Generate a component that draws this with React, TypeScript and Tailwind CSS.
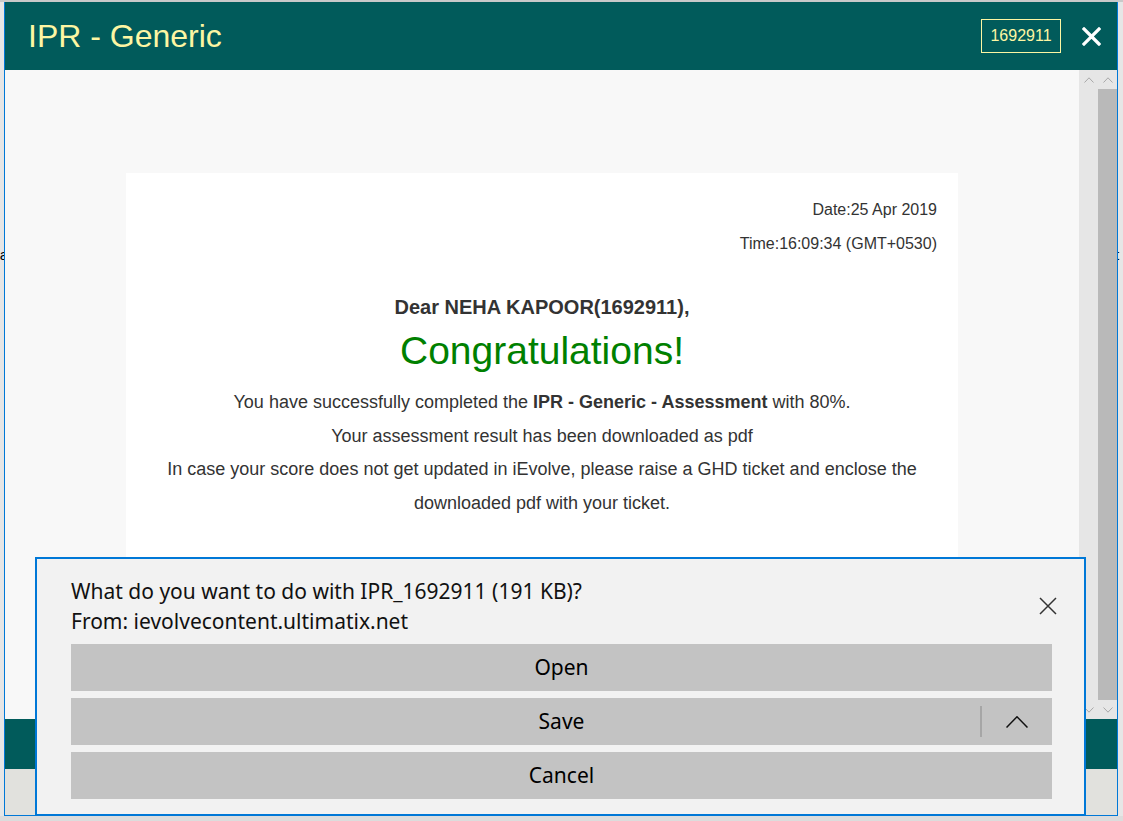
import React from "react";

const Chevron = ({ up, color = "#a8a8a8", w = 10, h = 6, sw = 1 }: { up?: boolean; color?: string; w?: number; h?: number; sw?: number }) => (
  <svg width={w} height={h} viewBox={`0 0 ${w} ${h}`} fill="none">
    {up ? (
      <path d={`M0.5 ${h - 0.5} L${w / 2} 0.8 L${w - 0.5} ${h - 0.5}`} stroke={color} strokeWidth={sw} />
    ) : (
      <path d={`M0.5 0.5 L${w / 2} ${h - 0.8} L${w - 0.5} 0.5`} stroke={color} strokeWidth={sw} />
    )}
  </svg>
);

const ScrollBar = ({ thumb }: { thumb?: boolean }) => (
  <div className="w-[19px] bg-[#e6e6e6] flex flex-col">
    <div className="h-[19px] flex items-center justify-center">
      <Chevron up />
    </div>
    <div className="flex-1 flex">
      {thumb && <div className="flex-1 bg-[#b9b9b9]" />}
    </div>
    <div className="h-[19px] flex items-center justify-center">
      <Chevron />
    </div>
  </div>
);

export default function App() {
  return (
    <div
      className="w-[1123px] h-[821px] bg-[#e4e4e4] relative overflow-hidden flex flex-col"
      style={{ fontFamily: '"Liberation Sans", Arial, sans-serif' }}
    >
      <div className="h-[2px] bg-[#c9c9c9]" />
      <div className="flex h-[814px]">
        <div className="w-[4px] overflow-hidden bg-[#e6e6e6] flex flex-col items-end pt-[243px]">
          <span className="text-[15px] leading-[20px] text-black -mr-[4px]">a</span>
        </div>
        <div className="w-[1114px] border-l border-r border-b border-[#0078d7] flex flex-col">
          {/* Header */}
          <div className="h-[68px] bg-[#015b5b] flex items-center pl-[23px] pr-[16px]">
            <div className="text-[32px] text-[#fdf6a3] leading-none flex-1">IPR - Generic</div>
            <div className="w-[80px] h-[34px] border border-[#fdf6a3] flex items-center justify-center text-[16px] text-[#fdf6a3]">
              1692911
            </div>
            <div className="ml-[20px] w-[20px] h-[22px] flex items-center justify-center">
              <svg width="19" height="19" viewBox="0 0 19 19">
                <path d="M2 2 L17 17 M17 2 L2 17" stroke="#ffffff" strokeWidth="3.2" strokeLinecap="square" />
              </svg>
            </div>
          </div>
          {/* Body */}
          <div className="h-[649px] flex">
            <div className="w-[1074px] bg-[#f8f8f8] overflow-hidden pt-[103px]">
              <div className="w-[832px] mx-auto bg-white pt-[20px] pb-[60px] px-[21px] text-[#333333]">
                <div className="text-right text-[16px] leading-[34px]">
                  <div>Date:25 Apr 2019</div>
                  <div>Time:16:09:34 (GMT+0530)</div>
                </div>
                <div className="mt-[32px] text-center text-[20px] leading-[28px] font-bold">
                  Dear NEHA KAPOOR(1692911),
                </div>
                <div className="mt-[8px] text-center text-[39px] leading-[44px] text-[#008000]">Congratulations!</div>
                <div className="mt-[13px] w-[770px] mx-auto text-center text-[18px] leading-[33.5px]">
                  <div>
                    You have successfully completed the <b>IPR - Generic - Assessment</b> with 80%.
                  </div>
                  <div>Your assessment result has been downloaded as pdf</div>
                  <div>
                    In case your score does not get updated in iEvolve, please raise a GHD ticket and enclose the
                    downloaded pdf with your ticket.
                  </div>
                </div>
              </div>
            </div>
            <ScrollBar />
            <ScrollBar thumb />
          </div>
          {/* Footer */}
          <div className="h-[50px] bg-[#015b5b]" />
          <div className="flex-1 bg-[#e1e1dd]" />
        </div>
        <div className="flex-1 overflow-hidden bg-[#e6e6e6] pt-[243px]">
          <span className="text-[15px] leading-[20px] text-black -ml-[3px] block">t</span>
        </div>
      </div>
      <div className="flex-1 bg-[#dcdcdc]" />

      {/* Download dialog */}
      <div
        className="absolute left-[35px] top-[557px] w-[1051px] h-[259px] border-2 border-[#0078d7] bg-[#f2f2f2] flex flex-col pl-[34px] pr-[32px] pt-[17px] pb-[14px]"
        style={{ fontFamily: '"Noto Sans", "Open Sans", sans-serif' }}
      >
        <div className="flex items-center">
          <div className="flex-1 text-[21px] leading-[30px] text-[#111111]">
            <div>What do you want to do with IPR_1692911 (191 KB)?</div>
            <div>From: ievolvecontent.ultimatix.net</div>
          </div>
          <div className="mr-[-5px] w-[18px] h-[18px] flex items-center justify-center">
            <svg width="18" height="18" viewBox="0 0 18 18">
              <path d="M1 1 L17 17 M17 1 L1 17" stroke="#333333" strokeWidth="1.5" />
            </svg>
          </div>
        </div>
        <div className="mt-[8px] flex flex-col gap-[7px]">
          <div className="h-[47px] bg-[#c3c3c3] flex items-center justify-center text-[21px] text-black">Open</div>
          <div className="h-[47px] bg-[#c3c3c3] flex items-center text-[21px] text-black">
            <div className="flex-1 text-center pl-[72px]">Save</div>
            <div className="w-[2px] h-[31px] bg-[#a6a6a6]" />
            <div className="w-[70px] flex items-center justify-center">
              <Chevron up color="#111111" w={22} h={12} sw={1.5} />
            </div>
          </div>
          <div className="h-[47px] bg-[#c3c3c3] flex items-center justify-center text-[21px] text-black">Cancel</div>
        </div>
      </div>
    </div>
  );
}
